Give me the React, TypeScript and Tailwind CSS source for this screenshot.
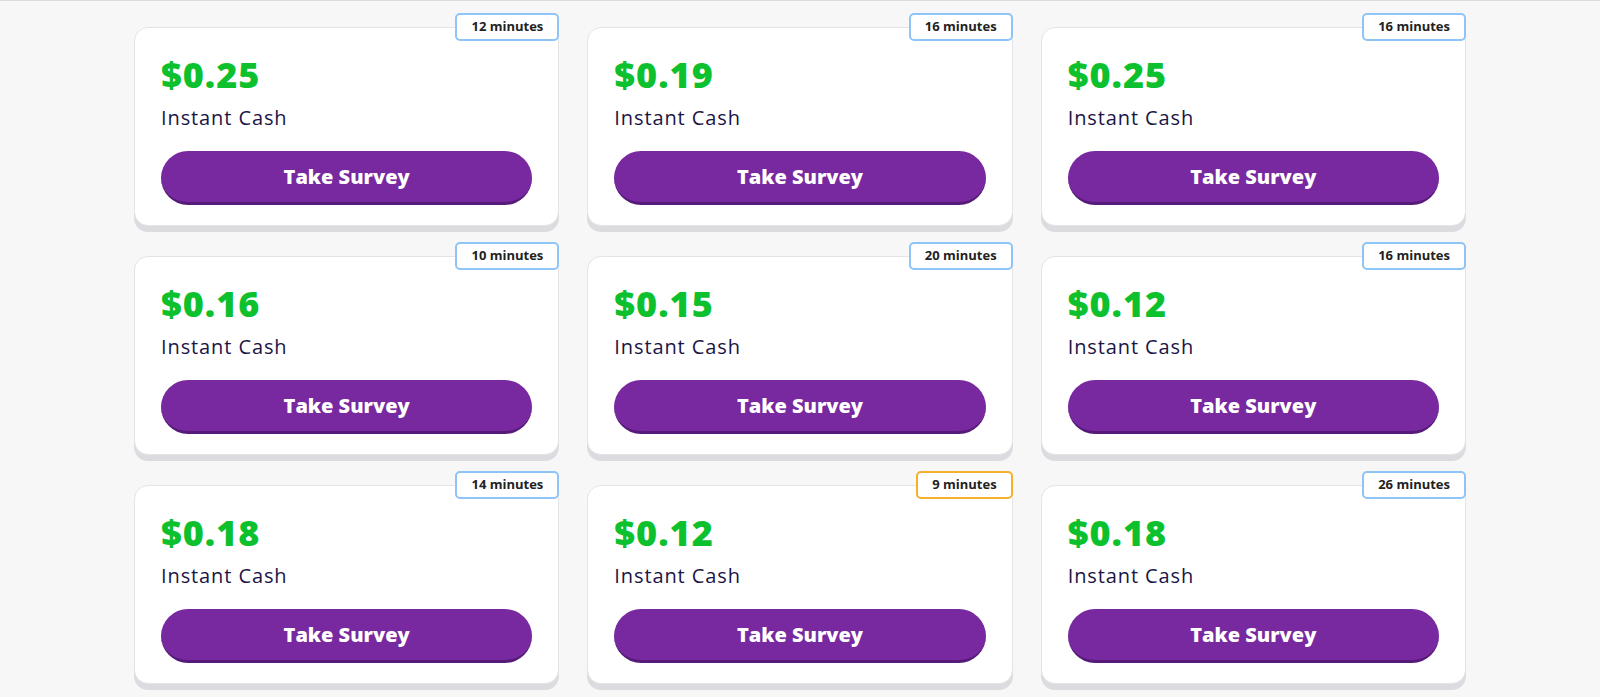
import React from 'react';

type Survey = { price: string; minutes: number; hot?: boolean };

const surveys: Survey[] = [
  { price: '$0.25', minutes: 12 },
  { price: '$0.19', minutes: 16 },
  { price: '$0.25', minutes: 16 },
  { price: '$0.16', minutes: 10 },
  { price: '$0.15', minutes: 20 },
  { price: '$0.12', minutes: 16 },
  { price: '$0.18', minutes: 14 },
  { price: '$0.12', minutes: 9, hot: true },
  { price: '$0.18', minutes: 26 },
];

function SurveyCard({ survey }: { survey: Survey }) {
  return (
    <div className="relative bg-white border border-[#e4e4e6] rounded-[14px] shadow-[0_6px_0_#dcdbe0] h-[199px] px-[26px] pt-[23px]">
      {/* time badge sits on the top edge */}
      <span
        className={`absolute -top-[15px] -right-px bg-white rounded-[5px] border-2 px-[14px] h-[28px] flex items-center text-[13px] font-bold text-[#222] ${
          survey.hot ? 'border-[#f7b02b]' : 'border-[#8ec4f6]'
        }`}
      >
        {survey.minutes} minutes
      </span>
      <div className="text-[36px] leading-[48px] font-extrabold text-[#0cc12d] tracking-[1px]">{survey.price}</div>
      <div className="text-[20px] leading-[28px] text-[#1b1545] tracking-[0.9px] mt-[5px]">Instant Cash</div>
      <button className="mt-[19px] w-full h-[54px] rounded-full bg-[#7829a0] border-b-[3px] border-[#561a78] text-white text-[20px] font-extrabold">
        Take Survey
      </button>
    </div>
  );
}

export default function App() {
  return (
    <div
      className="min-h-[697px] bg-[#f7f7f7] border-t border-[#dcdcdc]"
      style={{ fontFamily: '"Open Sans", "Liberation Sans", sans-serif' }}
    >
      <div className="mx-auto w-[1332px] pt-[26px] grid grid-cols-3 gap-x-[28px] gap-y-[30px]">
        {surveys.map((s, i) => (
          <SurveyCard key={i} survey={s} />
        ))}
      </div>
    </div>
  );
}
